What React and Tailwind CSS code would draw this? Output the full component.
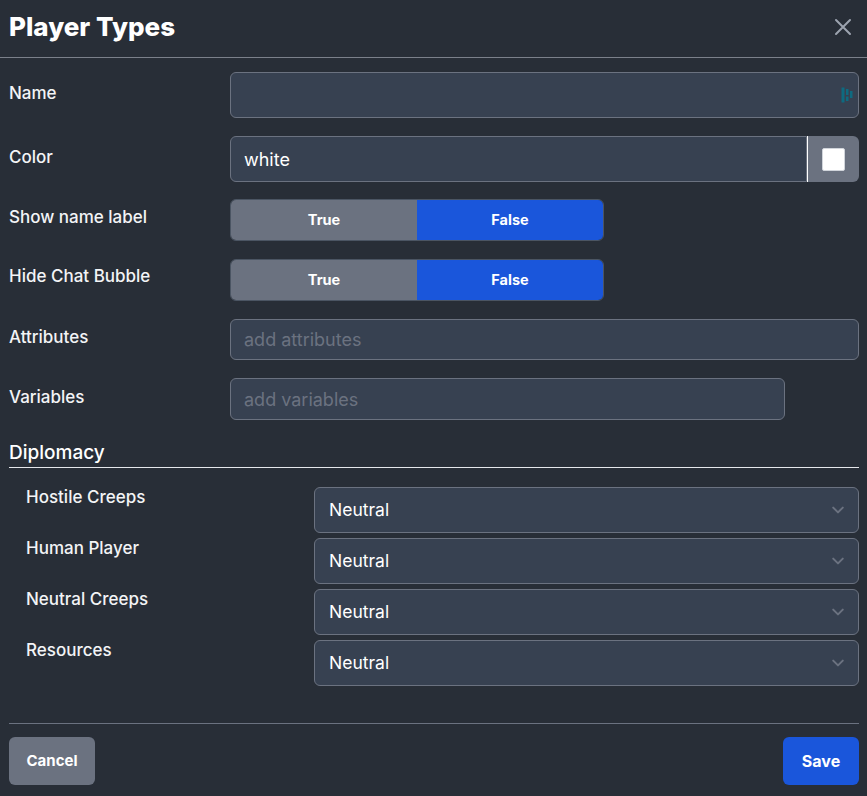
import React from 'react';

const Chevron = () => (
  <svg width="16" height="16" viewBox="0 0 20 20" fill="none" className="text-[#6b7280]">
    <path d="M4 7l6 6 6-6" stroke="currentColor" strokeWidth="2.5" strokeLinecap="round" strokeLinejoin="round" />
  </svg>
);

const Toggle = () => (
  <div className="flex h-[42px] w-[374px] overflow-hidden rounded-md border border-[#4b5563] text-[14.5px] font-bold text-white">
    <button className="flex-1 bg-[#6b7280]">True</button>
    <button className="flex-1 bg-[#1a56db]">False</button>
  </div>
);

const Select = () => (
  <div className="flex h-[46px] items-center justify-between rounded-md border border-[#6b7280] bg-[#374151] pl-[14px] pr-[12px] text-[17.5px] text-white">
    <span>Neutral</span>
    <Chevron />
  </div>
);

const App = () => {
  const diplomacy = ['Hostile Creeps', 'Human Player', 'Neutral Creeps', 'Resources'];

  return (
    <div className="min-h-[796px] w-[867px] bg-[#282e37] font-['Inter',sans-serif] text-[17px] text-[#f3f4f6]">
      {/* Header */}
      <div className="flex h-[58px] items-center justify-between border-b border-[#7b808a] pb-[4px] pl-[9px] pr-[14px]">
        <h1 className="text-[26px] font-extrabold text-white">Player Types</h1>
        <svg width="20" height="20" viewBox="0 0 20 20" className="text-[#9ca3af]">
          <path d="M3 3l14 14M17 3L3 17" stroke="currentColor" strokeWidth="2" strokeLinecap="round" />
        </svg>
      </div>

      <div className="pl-[9px] pr-[8px]">
        {/* Name */}
        <div className="mt-[14px] grid grid-cols-[221px_1fr]">
          <div className="pt-[9px] font-medium">Name</div>
          <div className="flex h-[46px] items-center justify-end rounded-md border border-[#6b7280] bg-[#374151] pr-[5px]">
            <svg width="12" height="16" viewBox="0 0 12 16">
              <rect x="0.5" y="0.5" width="3" height="15" fill="#0e6a80" />
              <rect x="5" y="2" width="2.5" height="6" fill="#0e6a80" />
              <rect x="5" y="9.5" width="2.5" height="4.5" fill="#0e6a80" />
              <rect x="9" y="4" width="2.5" height="7" fill="#0e6a80" />
            </svg>
          </div>
        </div>

        {/* Color */}
        <div className="mt-[18px] grid grid-cols-[221px_1fr]">
          <div className="pt-[9px] font-medium">Color</div>
          <div className="flex h-[46px]">
            <div className="flex flex-1 items-center rounded-l-md border border-[#6b7280] bg-[#374151] pl-[13px] text-[18px] text-white">white</div>
            <div className="w-px bg-white" />
            <div className="flex w-[51px] items-center justify-center rounded-r-md bg-[#6b7280]">
              <div className="h-[23px] w-[23px] rounded-[2px] border border-[#d1d5db] bg-white" />
            </div>
          </div>
        </div>

        {/* Show name label */}
        <div className="mt-[17px] grid grid-cols-[221px_1fr]">
          <div className="pt-[6px] font-medium">Show name label</div>
          <Toggle />
        </div>

        {/* Hide Chat Bubble */}
        <div className="mt-[18px] grid grid-cols-[221px_1fr]">
          <div className="pt-[5px] font-medium">Hide Chat Bubble</div>
          <Toggle />
        </div>

        {/* Attributes */}
        <div className="mt-[18px] grid grid-cols-[221px_1fr]">
          <div className="pt-[6px] font-medium">Attributes</div>
          <div className="flex h-[41px] items-center rounded-md border border-[#6b7280] bg-[#374151] pl-[13px] text-[18px] text-[#6b7280]">add attributes</div>
        </div>

        {/* Variables */}
        <div className="mt-[18px] grid grid-cols-[221px_555px]">
          <div className="pt-[7px] font-medium">Variables</div>
          <div className="flex h-[42px] items-center rounded-md border border-[#6b7280] bg-[#374151] pl-[13px] text-[18px] text-[#6b7280]">add variables</div>
        </div>

        {/* Diplomacy */}
        <div className="mt-[20px] border-b border-[#e5e7eb] pb-[1px] text-[19px] leading-[26px] font-medium text-white">Diplomacy</div>

        <div className="mt-[19px] flex flex-col gap-[5px] pl-[17px]">
          {diplomacy.map((label) => (
            <div key={label} className="grid grid-cols-[288px_1fr]">
              <div className="mt-[-2px] font-medium">{label}</div>
              <Select />
            </div>
          ))}
        </div>

        {/* Footer */}
        <div className="mt-[37px] border-t border-[#6b7280]" />
        <div className="flex justify-between pt-[13px]">
          <button className="h-[48px] w-[86px] rounded-md bg-[#6b7280] text-[15px] font-bold text-white">Cancel</button>
          <button className="h-[48px] w-[76px] rounded-md bg-[#1a56db] text-[16px] font-bold text-white">Save</button>
        </div>
      </div>
    </div>
  );
};

export default App;
